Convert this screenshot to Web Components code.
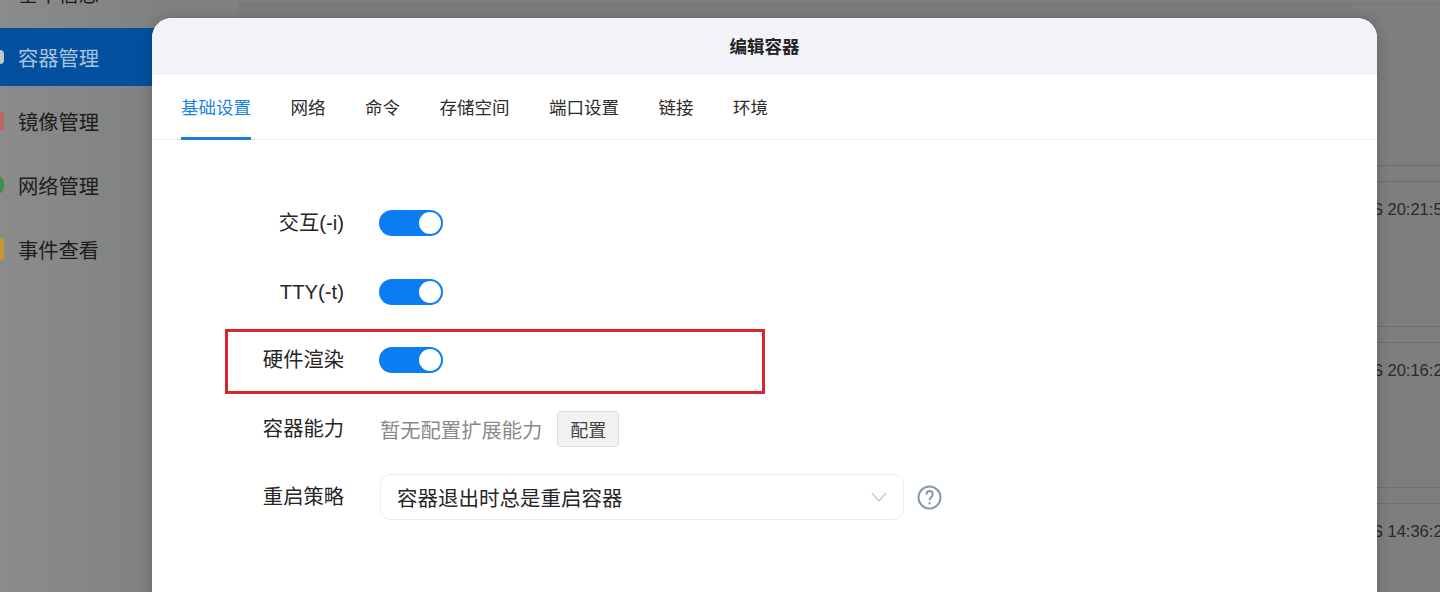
<!DOCTYPE html>
<html lang="zh">
<head>
<meta charset="utf-8">
<title>编辑容器</title>
<style>
html, body {
  margin: 0;
  height: 100%;
  overflow: hidden;
  background: #7e7e7e;
  font-family: "Liberation Sans", "Noto Sans CJK SC", sans-serif;
}
</style>
</head>
<body>
<app-shell>
  <side-nav slot="nav">
    <nav-item>基本信息</nav-item>
    <nav-item active color="#c2c5ca" h="14" r="4">容器管理</nav-item>
    <nav-item color="#b9675f" h="19" r="3">镜像管理</nav-item>
    <nav-item color="#3c9146" h="18" r="9">网络管理</nav-item>
    <nav-item color="#cb962e" h="22" r="4">事件查看</nav-item>
  </side-nav>
  <event-table slot="main">
    <event-row>CS 20:21:55</event-row>
    <event-row>CS 20:16:23</event-row>
    <event-row>CS 14:36:27</event-row>
  </event-table>
  <edit-dialog slot="dialog" heading="编辑容器">
    <tab-bar slot="tabs">
      <tab-item active>基础设置</tab-item>
      <tab-item>网络</tab-item>
      <tab-item>命令</tab-item>
      <tab-item>存储空间</tab-item>
      <tab-item>端口设置</tab-item>
      <tab-item>链接</tab-item>
      <tab-item>环境</tab-item>
    </tab-bar>
    <form-row label="交互(-i)"><toggle-switch></toggle-switch></form-row>
    <form-row label="TTY(-t)"><toggle-switch></toggle-switch></form-row>
    <form-row label="硬件渲染" marked><toggle-switch></toggle-switch></form-row>
    <form-row label="容器能力"><cap-field>暂无配置扩展能力</cap-field></form-row>
    <form-row label="重启策略"><select-box>容器退出时总是重启容器</select-box></form-row>
  </edit-dialog>
</app-shell>

<script>
"use strict";

function define(name, html, extra) {
  class El extends HTMLElement {
    constructor() {
      super();
      this.attachShadow({ mode: 'open' });
      const template = document.createElement("template");
      template.innerHTML = html;
      this.shadowRoot.appendChild(template.content.cloneNode(true));
    }
    connectedCallback() {
      if (extra) extra(this);
    }
  }
  customElements.define(name, El);
}

define("app-shell", `
<style>
:host { display: flex; position: relative; width: 100%; height: 100vh; overflow: hidden; }
.nav { flex: none; width: 238px; background: linear-gradient(90deg, #8b8b8b, #808282 65%); }
.main { flex: 1; min-width: 0; }
</style>
<div class="nav"><slot name="nav"></slot></div>
<div class="main"><slot name="main"></slot></div>
<slot name="dialog"></slot>
`);

define("side-nav", `
<style>
:host { display: flex; flex-direction: column; gap: 6px; margin-top: -36px; }
</style>
<slot></slot>
`);

define("nav-item", `
<style>
:host {
  display: flex; align-items: center; gap: 14px; height: 58px;
  font-size: 20.3px; color: #1c1c1c;
}
:host([active]) { background: #03509f; color: #a9c3dc; }
i {
  flex: none; width: 14px; height: var(--h, 15px); margin-left: -10px;
  border-radius: var(--r, 4px); background: var(--dot, transparent);
}
</style>
<i></i><slot></slot>
`, el => {
  if (el.getAttribute("color")) el.style.setProperty("--dot", el.getAttribute("color"));
  if (el.getAttribute("h")) el.style.setProperty("--h", el.getAttribute("h") + "px");
  if (el.getAttribute("r")) el.style.setProperty("--r", el.getAttribute("r") + "px");
});

define("event-table", `
<style>
:host { display: block; padding-top: 4px; }
.top { height: 1px; background: #767676; margin-bottom: 160px; }
</style>
<div class="top"></div>
<slot></slot>
`);

define("event-row", `
<style>
:host {
  display: block; height: 161px; box-sizing: border-box;
  border-top: 1px solid #6f6f6f;
  font-size: 16.5px; color: #2a2a2a; white-space: nowrap;
}
.inner { margin-top: 15px; border-top: 1px solid #6f6f6f; padding: 17px 0 0 1122px; line-height: 20px; }
</style>
<div class="inner"><slot></slot></div>
`);

define("edit-dialog", `
<style>
:host {
  display: block; position: absolute; left: 152px; top: 18px; width: 1225px; height: 620px;
  background: #fff; border-radius: 20px 20px 0 0; overflow: hidden;
  box-shadow: 0 0 14px rgba(0, 0, 0, .22);
}
header {
  display: flex; align-items: center; justify-content: center;
  height: 57px; padding-bottom: 3px; box-sizing: border-box; background: #f1f3f8;
  font-size: 17.5px; font-weight: 700; color: #222;
}
.form { display: flex; flex-direction: column; gap: 22.5px; padding-top: 60px; }
</style>
<header id="title"></header>
<slot name="tabs"></slot>
<div class="form"><slot></slot></div>
`, el => {
  el.shadowRoot.getElementById("title").textContent = el.getAttribute("heading");
});

define("tab-bar", `
<style>
:host {
  display: flex; gap: 39.5px; height: 65px; box-sizing: border-box; padding-left: 29px;
  border-bottom: 1px solid #eef0f3;
}
</style>
<slot></slot>
`);

define("tab-item", `
<style>
:host {
  display: flex; align-items: center; height: 65px; box-sizing: border-box;
  font-size: 17.5px; color: #2c2c2c; border-bottom: 3px solid transparent;
}
:host([active]) { color: #1a84e0; border-bottom-color: #1a7fd8; }
</style>
<slot></slot>
`);

define("form-row", `
<style>
:host { display: flex; align-items: center; height: 46px; gap: 36px; position: relative; }
label { flex: none; width: 192px; text-align: right; font-size: 20.3px; color: #262626; line-height: 46px; white-space: nowrap; }
.mark { display: none; position: absolute; left: 73px; top: -8px; width: 540px; height: 65px; box-sizing: border-box; border: 3px solid #d9262e; }
:host([marked]) .mark { display: block; }
</style>
<label id="lbl"></label>
<slot></slot>
<div class="mark"></div>
`, el => {
  el.shadowRoot.getElementById("lbl").textContent = el.getAttribute("label");
});

define("toggle-switch", `
<style>
:host { display: block; width: 64px; height: 26px; margin-left: -1px; border-radius: 13px; background: #0a7df2; position: relative; }
i { position: absolute; right: 2px; top: 2px; width: 22px; height: 22px; border-radius: 50%; background: #fff; }
</style>
<i></i>
`);

define("cap-field", `
<style>
:host { display: flex; align-items: center; gap: 15px; font-size: 20.3px; color: #8a8a8a; }
button {
  width: 62px; height: 36px; padding: 0; font: inherit; font-size: 18px; color: #444;
  background: #f2f2f2; border: 1px solid #dedede; border-radius: 4px;
}
</style>
<span><slot></slot></span><button>配置</button>
`);

define("select-box", `
<style>
:host { display: flex; align-items: center; gap: 13px; }
.box {
  display: flex; align-items: center; justify-content: space-between;
  width: 524px; height: 46px; box-sizing: border-box; padding: 0 16px;
  border: 1px solid #ececec; border-radius: 10px;
  font-size: 20.5px; color: #262626;
}
svg { display: block; }
</style>
<div class="box"><span><slot></slot></span>
  <svg width="16" height="10" viewBox="0 0 16 10" fill="none" stroke="#c8c8c8" stroke-width="1.4"><path d="M1 1l7 8 7-8"/></svg>
</div>
<svg width="25" height="25" viewBox="0 0 25 25" fill="none" stroke="#8a99a6" stroke-width="2">
  <circle cx="12.5" cy="12.5" r="11"/>
  <path d="M9.4 9.6c0-2 1.3-3.5 3.2-3.5s3.1 1.3 3.1 3.1c0 2.6-3.1 3-3.1 6"/>
  <path d="M12.6 17.2v2.2"/>
</svg>
`);
</script>
</body>
</html>
